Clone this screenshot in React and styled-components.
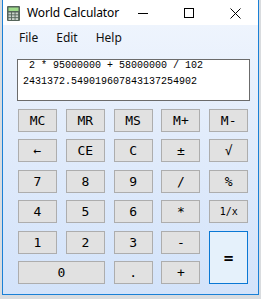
import React from 'react';
import styled, { createGlobalStyle } from 'styled-components';

const GlobalStyle = createGlobalStyle`
	html, body {
		margin: 0;
		padding: 0;
		background: #d9dcdf;
	}
	body {
		width: 261px;
		height: 299px;
		overflow: hidden;
	}
`;

const keys = [
	{ label: 'MC' },
	{ label: 'MR' },
	{ label: 'MS' },
	{ label: 'M+' },
	{ label: 'M-' },
	{ label: '←' },
	{ label: 'CE' },
	{ label: 'C' },
	{ label: '±' },
	{ label: '√' },
	{ label: '7' },
	{ label: '8' },
	{ label: '9' },
	{ label: '/' },
	{ label: '%' },
	{ label: '4' },
	{ label: '5' },
	{ label: '6' },
	{ label: '*' },
	{ label: '1/x', small: true },
	{ label: '1' },
	{ label: '2' },
	{ label: '3' },
	{ label: '-' },
	{ label: '=', equals: true },
	{ label: '0', wide: true },
	{ label: '.' },
	{ label: '+' },
];

function AppIcon() {
	return (
		<svg width='13' height='15' viewBox='0 0 13 15'>
			<rect x='0' y='0' width='13' height='15' rx='1' fill='#55655b' />
			<rect x='1.5' y='1.5' width='10' height='3.5' fill='#9fdc8a' />
			{[0, 1, 2].map((r) =>
				[0, 1, 2].map((c) => (
					<rect
						key={`${r}-${c}`}
						x={1.5 + c * 3.5}
						y={6.5 + r * 2.8}
						width='2.6'
						height='1.9'
						fill='#c9d2cb'
					/>
				))
			)}
		</svg>
	);
}

function App() {
	return (
		<>
			<GlobalStyle />
			<Window>
				<TitleBar>
					<IconSlot>
						<AppIcon />
					</IconSlot>
					<Title>World Calculator</Title>
					<Caption>
						<CaptionButton>
							<svg width='10' height='10' viewBox='0 0 10 10'>
								<path d='M0 5.5h10' stroke='#000' strokeWidth='1' />
							</svg>
						</CaptionButton>
						<CaptionButton>
							<svg width='10' height='10' viewBox='0 0 10 10'>
								<rect x='0.5' y='0.5' width='9' height='9' fill='none' stroke='#000' strokeWidth='1' />
							</svg>
						</CaptionButton>
						<CaptionButton>
							<svg width='11' height='11' viewBox='0 0 11 11'>
								<path d='M0.5 0.5l10 10M10.5 0.5l-10 10' stroke='#000' strokeWidth='1' />
							</svg>
						</CaptionButton>
					</Caption>
				</TitleBar>
				<Client>
					<MenuBar>
						<MenuItem>File</MenuItem>
						<MenuItem>Edit</MenuItem>
						<MenuItem>Help</MenuItem>
					</MenuBar>
					<Display>
						<Expression>{' 2 * 95000000 + 58000000 / 102'}</Expression>
						<Result>2431372.549019607843137254902</Result>
					</Display>
					<Keypad>
						{keys.map((k) => (
							<Key key={k.label} $small={k.small} $equals={k.equals} $wide={k.wide}>
								{k.label}
							</Key>
						))}
					</Keypad>
				</Client>
			</Window>
		</>
	);
}

export default App;

const Window = styled.div`
	box-sizing: border-box;
	margin-left: 2px;
	width: 257px;
	height: 295px;
	border: 1px solid #1a80d6;
	border-top: none;
	display: flex;
	flex-direction: column;
	background: #fff;
`;

const TitleBar = styled.div`
	height: 25px;
	display: flex;
	align-items: center;
	background: #ffffff;
	flex-shrink: 0;
`;

const IconSlot = styled.div`
	display: flex;
	margin-left: 4px;
	margin-top: 1px;
`;

const Title = styled.div`
	margin-left: 7px;
	font-family: 'Noto Sans', 'Open Sans', sans-serif;
	font-size: 12px;
	color: #000;
	letter-spacing: -0.1px;
`;

const Caption = styled.div`
	margin-left: auto;
	display: flex;
	height: 100%;
`;

const CaptionButton = styled.div`
	width: 46px;
	height: 100%;
	display: flex;
	align-items: center;
	justify-content: center;
	padding-top: 1px;
	box-sizing: border-box;
`;

const Client = styled.div`
	flex: 1;
	display: flex;
	flex-direction: column;
	background: linear-gradient(180deg, #eef4fd 0%, #e2ecfb 40%, #d3e3fa 100%);
	padding-left: 14px;
`;

const MenuBar = styled.div`
	height: 24px;
	display: flex;
	align-items: center;
	margin-left: -7px;
`;

const MenuItem = styled.div`
	padding: 0 9px;
	font-family: 'Noto Sans', 'Open Sans', sans-serif;
	font-size: 12px;
	color: #111;
`;

const Display = styled.div`
	box-sizing: border-box;
	margin-top: 10px;
	width: 233px;
	height: 42px;
	border: 1px solid #6b6b6b;
	background: #fff;
	padding: 0 5px;
	font-family: 'Liberation Mono', monospace;
	font-size: 10px;
	color: #000;
	white-space: pre;
`;

const Expression = styled.div`
	line-height: 12px;
`;

const Result = styled.div`
	line-height: 12px;
	margin-top: 4px;
`;

const Keypad = styled.div`
	margin-top: 8px;
	margin-left: 1px;
	display: grid;
	grid-template-columns: repeat(5, 39px);
	grid-template-rows: repeat(6, 23px);
	column-gap: 8.8px;
	row-gap: 7.4px;
`;

const Key = styled.div`
	box-sizing: border-box;
	display: flex;
	align-items: center;
	justify-content: center;
	background: ${(p) => (p.$equals ? '#e5f1fb' : '#e1e1e1')};
	border: 1px solid ${(p) => (p.$equals ? '#0a78d4' : '#adadad')};
	font-family: 'DejaVu Sans Mono', 'Liberation Mono', monospace;
	font-size: ${(p) => (p.$small ? '10px' : p.$equals ? '16px' : '13px')};
	font-weight: ${(p) => (p.$equals ? 'bold' : 'normal')};
	color: #000;
	grid-row: ${(p) => (p.$equals ? 'span 2' : 'auto')};
	grid-column: ${(p) => (p.$wide ? 'span 2' : 'auto')};
`;
